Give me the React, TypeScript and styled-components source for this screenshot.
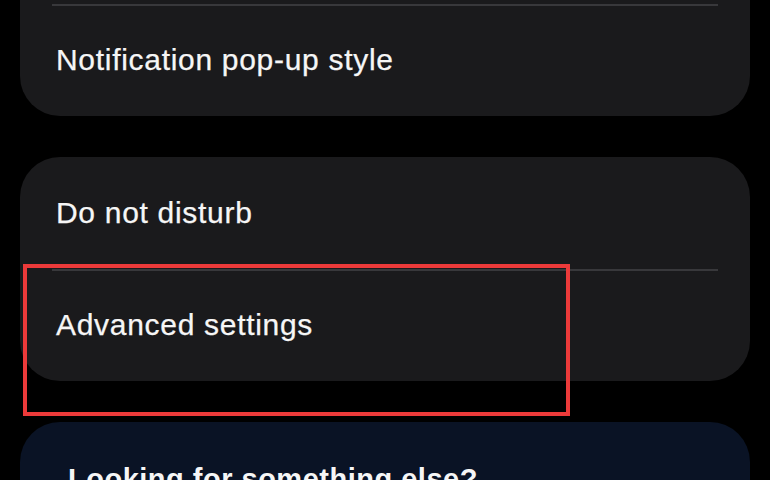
import styled, { createGlobalStyle } from 'styled-components';

const GlobalStyle = createGlobalStyle`
  html, body {
    margin: 0;
    padding: 0;
    background: #000;
  }
  body {
    font-family: 'Liberation Sans', Arial, sans-serif;
    -webkit-font-smoothing: antialiased;
  }
`;

interface CardPropsTypes {
  $clipped?: boolean;
  $tone?: 'grey' | 'navy';
}

export default function App() {
  return (
    <>
      <GlobalStyle />
      <Page>
        <Card $clipped>
          <Row $divided>
            <Label>Notification pop-up style</Label>
          </Row>
        </Card>
        <Highlighted>
          <Card>
            <Row>
              <Label>Do not disturb</Label>
            </Row>
            <Row $divided>
              <Label>Advanced settings</Label>
            </Row>
          </Card>
          <RedFrame />
        </Highlighted>
        <Card $tone="navy">
          <Heading>Looking for something else?</Heading>
        </Card>
      </Page>
    </>
  );
}

const Page = styled.main`
  display: flex;
  flex-direction: column;
  gap: 41px;
  padding: 0 20px;
  width: 770px;
  height: 480px;
  box-sizing: border-box;
  overflow: hidden;
`;

const Card = styled.section<CardPropsTypes>`
  display: flex;
  flex-direction: column;
  flex-shrink: 0;
  border-radius: ${({ $clipped }) => ($clipped ? '0 0 40px 40px' : '40px')};
  background-color: ${({ $tone }) => ($tone === 'navy' ? '#0a1325' : '#1a1a1c')};
  padding-top: ${({ $clipped }) => ($clipped ? '4px' : '0')};
`;

const Row = styled.div<{ $divided?: boolean }>`
  display: flex;
  align-items: center;
  position: relative;
  height: 112px;
  padding: 0 36px;

  &::before {
    display: ${({ $divided }) => ($divided ? 'block' : 'none')};
    position: absolute;
    top: 0;
    left: 32px;
    right: 32px;
    height: 2px;
    background-color: #38383b;
    content: '';
  }
`;

const Label = styled.span`
  color: #f6f6f6;
  font-size: 30px;
  letter-spacing: 0.7px;
  -webkit-text-stroke: 0.25px #f6f6f6;
`;

const Heading = styled.h3`
  margin: 0;
  padding: 41px 48px;
  color: #f6f6f6;
  font-size: 29px;
  font-weight: 700;
  letter-spacing: 0.5px;
`;

const Highlighted = styled.div`
  position: relative;
`;

const RedFrame = styled.div`
  position: absolute;
  top: 107px;
  left: 3px;
  width: 547px;
  height: 152px;
  box-sizing: border-box;
  border: 4px solid #ec3a3a;
  pointer-events: none;
`;
